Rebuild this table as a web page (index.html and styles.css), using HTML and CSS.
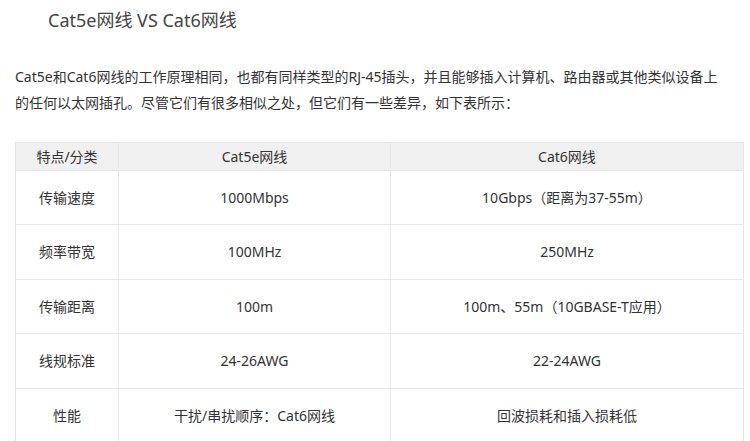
FILE: index.html
```html
<!DOCTYPE html>
<html lang="zh-CN">
<head>
<meta charset="utf-8">
<link rel="stylesheet" href="styles.css">
</head>
<body>
<div class="article">
  <h2 class="title">Cat5e网线 VS Cat6网线</h2>
  <p class="intro">Cat5e和Cat6网线的工作原理相同，也都有同样类型的RJ-45插头，并且能够插入计算机、路由器或其他类似设备上的任何以太网插孔。尽管它们有很多相似之处，但它们有一些差异，如下表所示：</p>
  <table class="compare">
    <colgroup>
      <col class="c1"><col class="c2"><col class="c3">
    </colgroup>
    <thead>
      <tr><th>特点/分类</th><th>Cat5e网线</th><th>Cat6网线</th></tr>
    </thead>
    <tbody>
      <tr><td>传输速度</td><td>1000Mbps</td><td>10Gbps（距离为37-55m）</td></tr>
      <tr class="odd"><td>频率带宽</td><td>100MHz</td><td>250MHz</td></tr>
      <tr><td>传输距离</td><td>100m</td><td>100m、55m（10GBASE-T应用）</td></tr>
      <tr class="odd"><td>线规标准</td><td>24-26AWG</td><td>22-24AWG</td></tr>
      <tr><td>性能</td><td>干扰/串扰顺序：Cat6网线</td><td>回波损耗和插入损耗低</td></tr>
    </tbody>
  </table>
</div>
</body>
</html>
```
FILE: styles.css
```css
html, body {
  margin: 0;
  padding: 0;
  background: #ffffff;
}
body {
  font-family: "Noto Sans", "Noto Sans CJK SC", sans-serif;
  color: #333333;
}
.article {
  width: 728px;
  padding: 0 0 0 15px;
}
.title {
  margin: 0;
  padding: 7px 0 0 33px;
  font-size: 18px;
  font-weight: 400;
  line-height: 26px;
  color: #444444;
}
.intro {
  margin: 31px 16px 0 0;
  font-size: 14px;
  line-height: 26px;
  color: #333333;
}
.compare {
  margin-top: 26px;
  width: 728px;
  border-collapse: collapse;
  table-layout: fixed;
  font-size: 14px;
  color: #333333;
}
.c1 { width: 103px; }
.c2 { width: 272px; }
.c3 { width: 353px; }
.compare th,
.compare td {
  border: 1px solid #e6e6e6;
  text-align: center;
  padding: 0;
  font-weight: 400;
  line-height: 20px;
}
.compare th {
  background: #f0f0f0;
  height: 27px;
}
.compare td {
  height: 53px;
}
.compare tr.odd td {
  height: 54px;
}
```
